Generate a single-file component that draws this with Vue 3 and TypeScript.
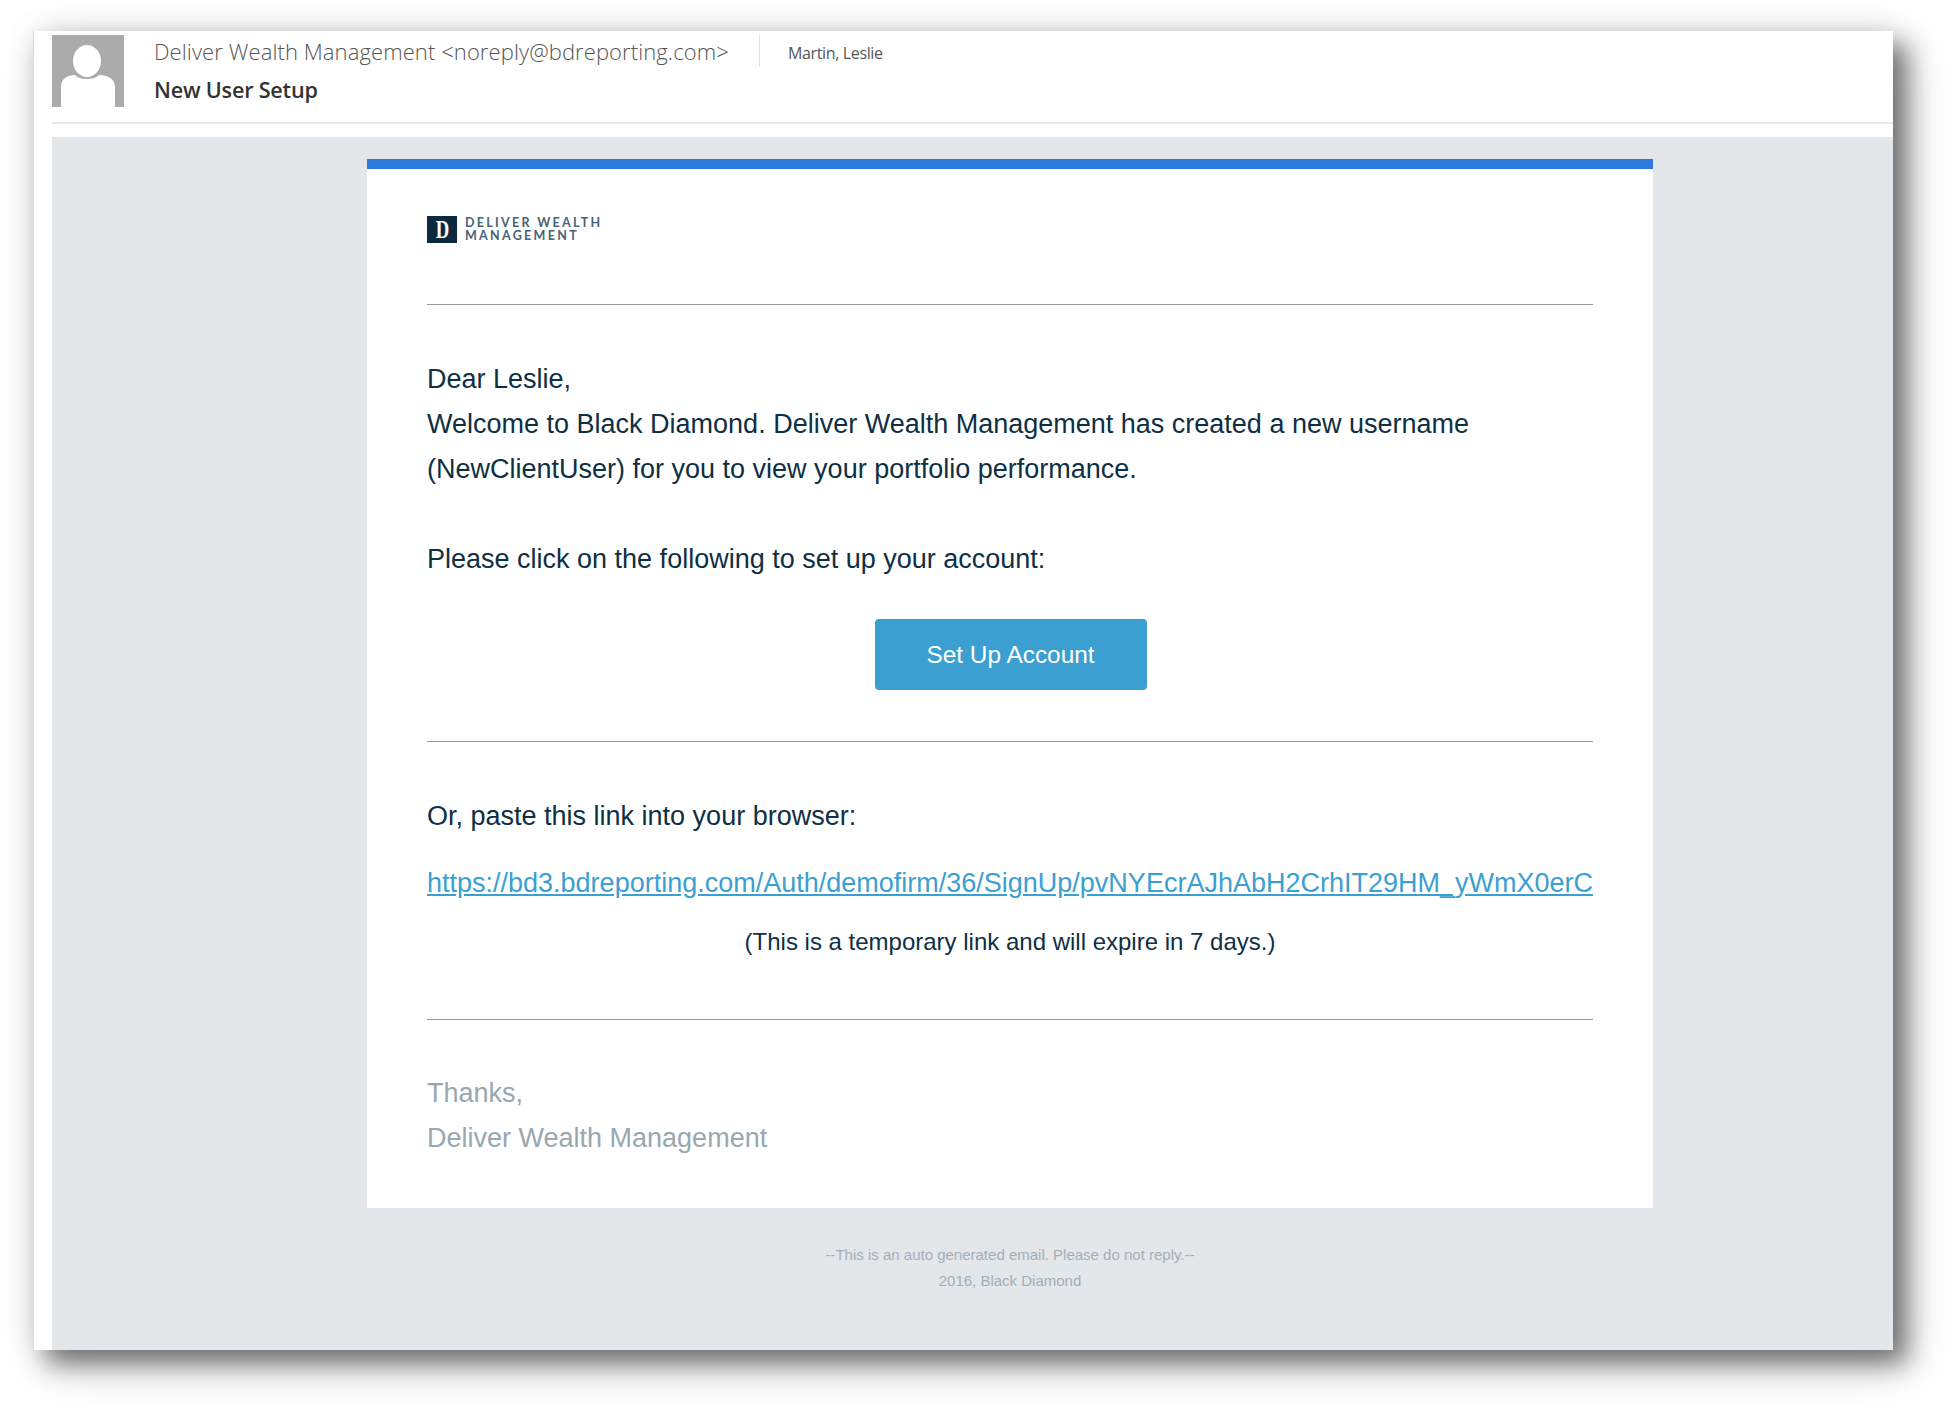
<script setup lang="ts">
const link = 'https://bd3.bdreporting.com/Auth/demofirm/36/SignUp/pvNYEcrAJhAbH2CrhIT29HM_yWmX0erC'
</script>

<template>
  <div class="page">
    <div class="window">
      <header class="mail-head">
        <svg class="avatar" viewBox="0 0 72 72" width="72" height="72">
          <rect width="72" height="72" fill="#ababab" />
          <ellipse cx="35" cy="26" rx="14" ry="16" fill="#fff" />
          <path d="M9 72V52c0-8 6-12 14-12 3 3 7 4 12 4s9-1 12-4c9 0 16 4 16 12v20z" fill="#fff" />
        </svg>
        <div class="mail-meta">
          <div class="from-row">
            <span class="from">Deliver Wealth Management &lt;noreply@bdreporting.com&gt;</span>
            <span class="to">Martin, Leslie</span>
          </div>
          <div class="subject">New User Setup</div>
        </div>
      </header>

      <main class="mail-body">
        <section class="card">
          <div class="logo">
            <span class="logo-mark"><span class="logo-d">D</span></span>
            <span class="logo-text">DELIVER WEALTH<br />MANAGEMENT</span>
          </div>
          <hr class="logo-rule" />

          <p class="copy first">Dear Leslie,</p>
          <p class="copy">Welcome to Black Diamond. Deliver Wealth Management has created a new username (NewClientUser) for you to view your portfolio performance.</p>
          <p class="copy gap">Please click on the following to set up your account:</p>

          <div class="cta-row">
            <a class="cta">Set Up Account</a>
          </div>
          <hr class="cta-rule" />

          <p class="copy paste">Or, paste this link into your browser:</p>
          <a class="link">{{ link }}</a>
          <p class="expire">(This is a temporary link and will expire in 7 days.)</p>
          <hr class="expire-rule" />

          <p class="thanks">Thanks,<br />Deliver Wealth Management</p>
        </section>

        <footer class="foot">
          <div>--This is an auto generated email. Please do not reply.--</div>
          <div>2016, Black Diamond</div>
        </footer>
      </main>
    </div>
  </div>
</template>

<style>
html,
body {
  background: #fff;
}
</style>

<style scoped>
.page {
  width: 1956px;
  height: 1412px;
  padding: 31px 0 0 33px;
  box-sizing: border-box;
  overflow: hidden;
  font-family: "Liberation Sans", Arial, sans-serif;
}

.window {
  width: 1860px;
  height: 1319px;
  box-sizing: border-box;
  padding-left: 18px;
  background: #fff;
  border-left: 1px solid #dcdcdc;
  display: flex;
  flex-direction: column;
  box-shadow: 14px 14px 24px rgba(0, 0, 0, 0.48), 14px 14px 48px rgba(0, 0, 0, 0.16), 0 0 28px rgba(0, 0, 0, 0.08);
}

.mail-head {
  height: 93px;
  box-sizing: border-box;
  padding-top: 4px;
  display: flex;
  border-bottom: 2px solid #e8e8e8;
}

.avatar {
  flex: none;
}

.mail-meta {
  margin-left: 30px;
  font-family: "Open Sans", sans-serif;
}

.from-row {
  display: flex;
  align-items: center;
  height: 32px;
}

.from {
  font-size: 22px;
  font-weight: 300;
  letter-spacing: 0.09px;
  color: #555;
  padding-right: 30px;
  border-right: 1px solid #e0e0e0;
  line-height: 32px;
}

.to {
  font-size: 16px;
  color: #555;
  margin: 3px 0 0 28px;
  letter-spacing: -0.35px;
}

.subject {
  margin-top: 8px;
  font-size: 21.6px;
  font-weight: 600;
  letter-spacing: -0.2px;
  line-height: 30px;
  color: #333;
}

.mail-body {
  margin-top: 13px;
  flex: 1;
  background: #e4e7ea;
  padding: 22px 0 0 315px;
}

.card {
  width: 1286px;
  height: 1049px;
  box-sizing: border-box;
  background: #fff;
  border-top: 10px solid #2e7ade;
  padding: 47px 60px 0;
  color: #0e2f44;
}

.logo {
  display: flex;
  align-items: center;
  height: 27px;
}

.logo-mark {
  width: 30px;
  height: 27px;
  background: #0b2a40;
  color: #fff;
  font-family: "Liberation Serif", serif;
  font-weight: 700;
  font-size: 26px;
  line-height: 27px;
  text-align: center;
}

.logo-d {
  display: inline-block;
  transform: scaleX(0.72);
}

.logo-text {
  margin: -1px 0 0 8px;
  font-family: "Lato", sans-serif;
  font-size: 12.5px;
  font-weight: 700;
  line-height: 13px;
  letter-spacing: 2.3px;
  color: #46637a;
}

hr {
  margin: 0;
  border: 0;
  height: 1px;
  background: #999;
}

.logo-rule {
  margin-top: 61px;
}

.copy {
  margin: 0;
  font-size: 27px;
  line-height: 45px;
}

.first {
  margin-top: 52px;
}

.gap {
  margin-top: 45px;
}

.cta-row {
  margin-top: 37px;
  padding-left: 1px;
  display: flex;
  justify-content: center;
}

.cta {
  width: 272px;
  height: 71px;
  border-radius: 4px;
  background: #3ba0d1;
  color: #fff;
  font-size: 24.4px;
  line-height: 71px;
  text-align: center;
}

.cta-rule {
  margin-top: 51px;
}

.paste {
  margin-top: 52px;
}

.link {
  display: block;
  margin-top: 22px;
  font-size: 27px;
  line-height: 45px;
  white-space: nowrap;
  color: #3ba0d1;
  text-decoration: underline;
}

.expire {
  margin: 13px 0 0;
  font-size: 24px;
  line-height: 45px;
  text-align: center;
}

.expire-rule {
  margin-top: 55px;
}

.thanks {
  margin: 51px 0 0;
  font-size: 27px;
  line-height: 45px;
  color: #98a7b0;
}

.foot {
  width: 1286px;
  margin-top: 34px;
  font-size: 15px;
  line-height: 26px;
  text-align: center;
  color: #a2aeb6;
}
</style>
